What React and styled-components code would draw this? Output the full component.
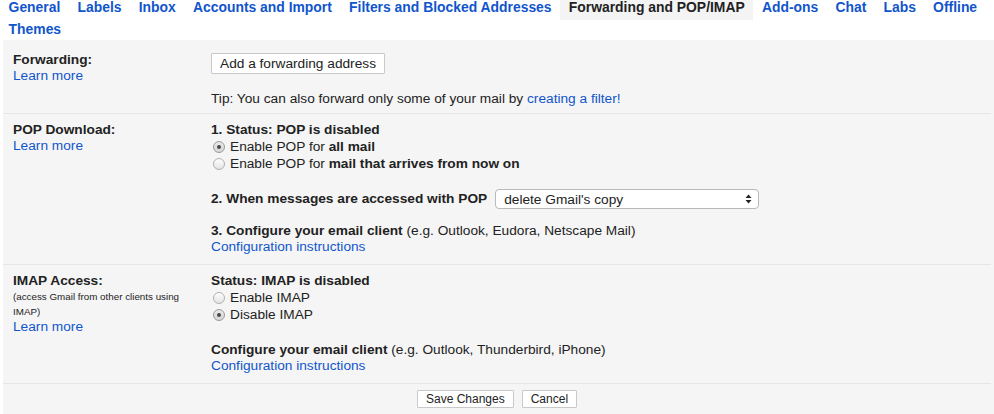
import React from "react";
import styled, { createGlobalStyle } from "styled-components";

const GlobalStyle = createGlobalStyle`
  html, body { margin: 0; padding: 0; background: #fff; overflow: hidden; }
  body { font-family: "Liberation Sans", Arial, Helvetica, sans-serif; color: #222; }
`;

const Page = styled.div`
  display: flow-root;
  width: 994px;
  height: 414px;
  overflow: hidden;
`;

const TabBar = styled.nav`
  display: flex;
  flex-wrap: wrap;
  align-items: flex-start;
  margin: -4px 0 0;
`;

const Tab = styled.a`
  padding: 0 8.6px ${(p) => (p.$active ? "2px" : "0")};
  margin-bottom: ${(p) => (p.$active ? "-2px" : "0")};
  font-size: 13.9px;
  font-weight: bold;
  line-height: 22px;
  white-space: nowrap;
  text-decoration: none;
  color: ${(p) => (p.$active ? "#222" : "#15c")};
  background: ${(p) => (p.$active ? "#f4f4f4" : "transparent")};
`;

const Panel = styled.main`
  margin-left: 3px;
  padding-right: 3px;
  background: #f5f5f5;
  font-size: 13.7px;
  line-height: 16px;
`;

const Section = styled.section`
  display: grid;
  grid-template-columns: 199px 1fr;
  border-bottom: 1px solid #e6e6e6;
  padding: ${(p) => p.$pad};
`;

const LabelCell = styled.div`
  padding: 0 10px;
  display: flex;
  flex-direction: column;
`;

const ContentCell = styled.div`
  padding-left: 9px;
  display: flex;
  flex-direction: column;
  align-items: flex-start;
`;

const Title = styled.b`
  font-weight: bold;
`;

const Link = styled.a`
  color: #15c;
  text-decoration: none;
`;

const Small = styled.span`
  font-size: 9.8px;
  line-height: 15px;
`;

const Line = styled.div`
  margin-top: ${(p) => p.$mt || 0}px;
  white-space: nowrap;
`;

const Button = styled.button`
  font-family: inherit;
  font-size: ${(p) => p.$fs || 13.7}px;
  height: ${(p) => p.$h || 21}px;
  margin-top: ${(p) => p.$mt || 0}px;
  padding: 0 8px;
  border: 1px solid #c9c9c9;
  border-radius: 1px;
  background: #fff;
  color: #222;
  line-height: 1;
`;

const RadioRow = styled.label`
  display: flex;
  align-items: center;
  gap: 5px;
  height: 17px;
  padding-left: 2px;
  white-space: nowrap;
`;

const RadioMark = styled.span`
  box-sizing: border-box;
  width: 12px;
  height: 12px;
  border-radius: 50%;
  border: 1px solid ${(p) => (p.$checked ? "#9a9a9a" : "#b0b0b0")};
  background: ${(p) =>
    p.$checked
      ? "linear-gradient(#e9e9e9, #d6d6d6)"
      : "linear-gradient(#fdfdfd, #e4e4e4)"};
  display: grid;
  place-items: center;
  &::after {
    content: "";
    width: 4px;
    height: 4px;
    border-radius: 50%;
    background: ${(p) => (p.$checked ? "#4a4a4a" : "transparent")};
  }
`;

const SelectRow = styled.div`
  display: flex;
  align-items: center;
  gap: 8px;
  height: 20px;
  margin-top: ${(p) => p.$mt || 0}px;
  white-space: nowrap;
`;

const SelectWrap = styled.div`
  position: relative;
  width: 264px;
  height: 20px;
`;

const Select = styled.select`
  appearance: none;
  -webkit-appearance: none;
  box-sizing: border-box;
  width: 100%;
  height: 20px;
  border: 1px solid #b9b9b9;
  border-radius: 4px;
  background: #fff;
  font-family: inherit;
  font-size: 13.7px;
  color: #222;
  padding: 0 0 0 8px;
  outline: none;
`;

const Arrows = styled.svg`
  position: absolute;
  right: 7px;
  top: 5px;
  pointer-events: none;
`;

const Footer = styled.div`
  display: flex;
  justify-content: center;
  gap: 8px;
  padding: 6px 0 12px;
`;

const tabs = [
  "General",
  "Labels",
  "Inbox",
  "Accounts and Import",
  "Filters and Blocked Addresses",
  "Forwarding and POP/IMAP",
  "Add-ons",
  "Chat",
  "Labs",
  "Offline",
  "Themes",
];

function Radio({ checked, children }) {
  return (
    <RadioRow>
      <RadioMark $checked={checked} />
      <span>{children}</span>
    </RadioRow>
  );
}

export default function App() {
  return (
    <Page>
      <GlobalStyle />
      <TabBar>
        {tabs.map((t) => (
          <Tab key={t} $active={t === "Forwarding and POP/IMAP"}>
            {t}
          </Tab>
        ))}
      </TabBar>
      <Panel>
        <Section $pad="12px 0 6px">
          <LabelCell>
            <Title>Forwarding:</Title>
            <Link>Learn more</Link>
          </LabelCell>
          <ContentCell>
            <Button $mt={1}>Add a forwarding address</Button>
            <Line $mt={17}>
              Tip: You can also forward only some of your mail by{" "}
              <Link>creating a filter!</Link>
            </Line>
          </ContentCell>
        </Section>

        <Section $pad="8px 0 9px">
          <LabelCell>
            <Title>POP Download:</Title>
            <Link>Learn more</Link>
          </LabelCell>
          <ContentCell>
            <Title>1. Status: POP is disabled</Title>
            <Radio checked>
              Enable POP for <b>all mail</b>
            </Radio>
            <Radio>
              Enable POP for <b>mail that arrives from now on</b>
            </Radio>
            <SelectRow $mt={17}>
              <Title>2. When messages are accessed with POP</Title>
              <SelectWrap>
                <Select defaultValue="delete">
                  <option value="keep">keep Gmail's copy in the Inbox</option>
                  <option value="read">mark Gmail's copy as read</option>
                  <option value="archive">archive Gmail's copy</option>
                  <option value="delete">delete Gmail's copy</option>
                </Select>
                <Arrows width="7" height="10" viewBox="0 0 7 10">
                  <path d="M0.5 4 L3.5 0.5 L6.5 4 Z" fill="#222" />
                  <path d="M0.5 6 L3.5 9.5 L6.5 6 Z" fill="#222" />
                </Arrows>
              </SelectWrap>
            </SelectRow>
            <Line $mt={14}>
              <b>3. Configure your email client</b> (e.g. Outlook, Eudora,
              Netscape Mail)
            </Line>
            <Link>Configuration instructions</Link>
          </ContentCell>
        </Section>

        <Section $pad="8px 0 9px">
          <LabelCell>
            <Title>IMAP Access:</Title>
            <Small>(access Gmail from other clients using IMAP)</Small>
            <Link>Learn more</Link>
          </LabelCell>
          <ContentCell>
            <Title>Status: IMAP is disabled</Title>
            <Radio>Enable IMAP</Radio>
            <Radio checked>Disable IMAP</Radio>
            <Line $mt={19}>
              <b>Configure your email client</b> (e.g. Outlook, Thunderbird,
              iPhone)
            </Line>
            <Link>Configuration instructions</Link>
          </ContentCell>
        </Section>

        <Footer>
          <Button $fs={12} $h={18}>
            Save Changes
          </Button>
          <Button $fs={12} $h={18}>
            Cancel
          </Button>
        </Footer>
      </Panel>
    </Page>
  );
}
